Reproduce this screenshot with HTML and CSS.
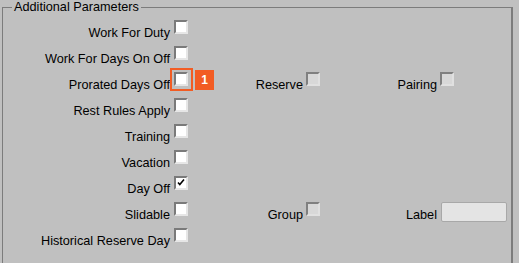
FILE: index.html
```html
<!DOCTYPE html>
<html lang="en">
<head>
    <meta charset="UTF-8">
    <meta name="viewport" content="width=device-width, initial-scale=1.0">
    <title>Additional Parameters</title>
    <link rel="stylesheet" href="styles.css">
</head>
<body>
    <fieldset class="params">
        <legend>Additional Parameters</legend>
        <div class="grid">
            <span class="lbl">Work For Duty</span>
            <span class="chk"></span>
            <span></span><span></span><span></span><span></span>

            <span class="lbl">Work For Days On Off</span>
            <span class="chk"></span>
            <span></span><span></span><span></span><span></span>

            <span class="lbl">Prorated Days Off</span>
            <span class="chk focus-wrap">
                <span class="focus-ring"></span>
                <span class="badge">1</span>
            </span>
            <span class="lbl">Reserve</span>
            <span class="chk disabled"></span>
            <span class="lbl">Pairing</span>
            <span class="chk disabled"></span>

            <span class="lbl">Rest Rules Apply</span>
            <span class="chk"></span>
            <span></span><span></span><span></span><span></span>

            <span class="lbl">Training</span>
            <span class="chk"></span>
            <span></span><span></span><span></span><span></span>

            <span class="lbl">Vacation</span>
            <span class="chk"></span>
            <span></span><span></span><span></span><span></span>

            <span class="lbl">Day Off</span>
            <span class="chk">
                <svg class="tick" width="10" height="10" viewBox="0 0 10 10">
                    <polyline points="2,4.5 3.8,6.5 8,1.5" fill="none" stroke="#000" stroke-width="1.6"/>
                </svg>
            </span>
            <span></span><span></span><span></span><span></span>

            <span class="lbl">Slidable</span>
            <span class="chk"></span>
            <span class="lbl">Group</span>
            <span class="chk disabled"></span>
            <span class="lbl">Label</span>
            <span class="txt"></span>

            <span class="lbl">Historical Reserve Day</span>
            <span class="chk"></span>
            <span></span><span></span><span></span><span></span>
        </div>
    </fieldset>
</body>
</html>
```

FILE: styles.css
```css
html, body {
    margin: 0;
    padding: 0;
    overflow: hidden;
}
body {
    background: #c0c0c0;
    font-family: "Liberation Sans", Arial, sans-serif;
    font-size: 12.7px;
    color: #000;
}
.params {
    box-sizing: border-box;
    width: 511px;
    height: 300px;
    margin: 0 0 0 2px;
    padding: 5px 0 0 0;
    border: 1px solid #7c7c7c;
    border-right-width: 2px;
}
.params legend {
    margin-left: 9px;
    padding: 0 2px;
    line-height: 15px;
}
.grid {
    display: grid;
    grid-template-columns: 171px 14px 119px 14px 120px 66px;
    grid-auto-rows: 26px;
    align-items: start;
}
.lbl {
    text-align: right;
    padding-right: 4px;
    padding-top: 6px;
    line-height: 15px;
    white-space: nowrap;
}
.chk {
    position: relative;
    box-sizing: border-box;
    width: 14px;
    height: 14px;
    background: #fff;
    border: 2px solid;
    border-color: #7a7a7a #e6e6e6 #e6e6e6 #7a7a7a;
}
.chk.disabled {
    background: #d8d8d8;
    border-color: #808080 #e0e0e0 #e0e0e0 #808080;
    margin-left: -1px;
}
.tick {
    display: block;
}
.focus-ring {
    position: absolute;
    left: -6px;
    top: -6px;
    width: 19px;
    height: 19px;
    border: 2px solid #f25c23;
}
.badge {
    position: absolute;
    left: 19px;
    top: -4px;
    width: 19px;
    height: 20px;
    background: #f25c23;
    color: #fff;
    font-weight: bold;
    font-size: 12px;
    line-height: 20px;
    text-align: center;
}
.txt {
    box-sizing: border-box;
    width: 66px;
    height: 20px;
    background: #e4e4e4;
    border: 1px solid #a8a8a8;
    border-radius: 2px;
}
```
